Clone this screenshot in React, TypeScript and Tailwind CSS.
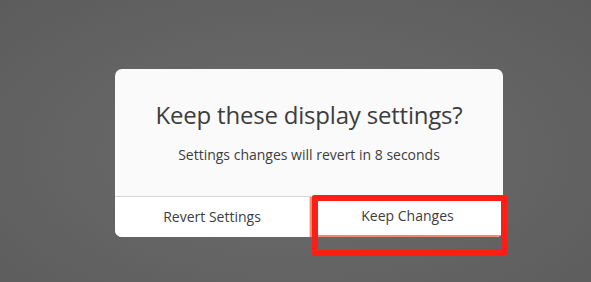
export default function App() {
  return (
    <main className="relative h-[282px] w-[591px] overflow-hidden bg-[radial-gradient(ellipse_at_50%_55%,#6c6c6c_0%,#656565_45%,#5c5c5c_100%)] pl-[115px] pt-[69px] font-['Open_Sans',sans-serif] text-[#3d3d3d]">
      {/* Dialog */}
      <div className="flex w-[388px] flex-col overflow-hidden rounded-[7px] bg-[#fafafa]">
        <div className="flex h-[127px] flex-col items-center pt-[30px]">
          <h1 className="text-[24px] leading-[32px] tracking-[-0.2px]">Keep these display settings?</h1>
          <p className="mt-[14px] text-[14px] leading-[20px]">Settings changes will revert in 8 seconds</p>
        </div>
        <div className="flex h-[41px] border-t border-[#d6d6d6] bg-white text-[14px]">
          <button className="flex flex-1 items-center justify-center border-r border-[#e0e0e0] pb-[1px]">
            Revert Settings
          </button>
          <button className="flex w-[193px] items-center justify-center border-b-2 border-l-2 border-[#ef8a6c] pb-[1px]">
            Keep Changes
          </button>
        </div>
      </div>

      {/* Annotation box */}
      <div className="absolute left-[312px] top-[195px] h-[61px] w-[195px] rounded-[2px] border-[6px] border-[#ff1e16]" />
    </main>
  );
}
